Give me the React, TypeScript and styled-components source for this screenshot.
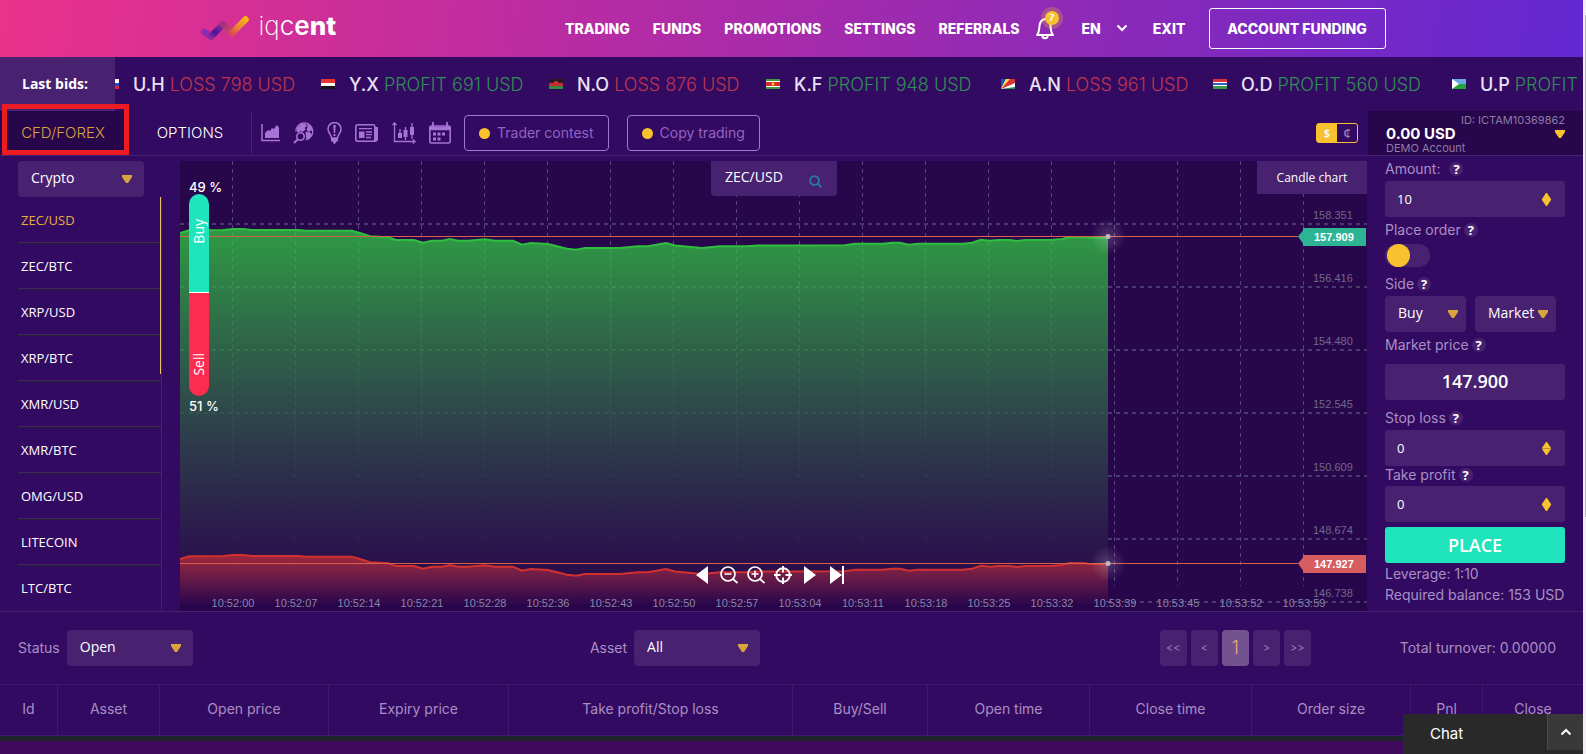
import React from "react";
import styled, { createGlobalStyle, css } from "styled-components";

const color = {
  panel: "#330a61",
  deep: "#28064b",
  box: "#482270",
  line: "#45226f",
  gold: "#f8c22f",
  goldDim: "#d9a43c",
  mint: "#20e4bb",
  red: "#fb2c4f",
  lilac: "#a873d6",
  muted: "#a98fc4",
};
const geo = `Inter, "Open Sans", sans-serif`;
const sans = `"Open Sans", "Noto Sans", sans-serif`;

const GlobalStyle = createGlobalStyle`
  *, *::before, *::after { box-sizing: border-box; }
  body { margin: 0; background: #3f0a5b; color: #fff; font-family: ${geo}; font-size: 14px; }
  button, input, select { font: inherit; color: inherit; margin: 0; }
  button { padding: 0; border: 0; background: none; cursor: pointer; }
  a { color: inherit; text-decoration: none; }
  svg { display: block; flex: none; }
`;

const Page = styled.div`
  min-height: 100vh;
  padding-right: 3px;
  overflow: hidden;
`;
const ScrollRail = styled.div`
  position: fixed;
  top: 0;
  right: 0;
  bottom: 0;
  width: 3px;
  background: #f4f0f6;
`;
const ScrollThumb = styled.div`
  width: 1px;
  height: 502px;
  margin: 15px 0 0 auto;
  background: #b9b5bd;
`;

/* ---------- header ---------- */
const Header = styled.header`
  height: 57px;
  background: linear-gradient(98deg, #ea328b 0%, #bb2ca1 34%, #8f2ab6 67%, #6228d2 100%);
`;
const HeaderInner = styled.div`
  display: flex;
  align-items: center;
  justify-content: space-between;
  width: 1188px;
  max-width: 100%;
  height: 56px;
  margin: 0 auto;
`;
const Logo = styled.a`
  display: flex;
  align-items: center;
  gap: 10px;
  padding-left: 3px;
`;
const LogoText = styled.span`
  padding-bottom: 4px;
  font: 300 26px/28px ${geo};
`;
const Thin = styled.span`
  font-weight: 200;
`;
const Semi = styled.span`
  font-weight: 600;
`;
const Heavy = styled.span`
  font-weight: 800;
`;
const Nav = styled.nav`
  display: flex;
  align-items: center;
  gap: 23px;
  font-weight: 800;
  font-size: 14px;
`;
const BellButton = styled.button`
  position: relative;
  width: 24px;
  height: 26px;
  margin-left: -8px;
`;
const BellBadge = styled.span`
  position: absolute;
  top: -4px;
  right: 0;
  width: 14px;
  height: 14px;
  border-radius: 50%;
  background: ${color.gold};
  box-shadow: 0 0 0 4px rgba(248, 194, 47, 0.25);
  font: 700 9px/14px ${geo};
  text-align: center;
`;
const LangButton = styled.button`
  display: flex;
  align-items: center;
  gap: 15px;
  padding-right: 2px;
  font-weight: 800;
`;
const FundingButton = styled.button`
  height: 41px;
  width: 177px;
  border: 1px solid #fff;
  border-radius: 3px;
  font-weight: 800;
`;

/* ---------- ticker ---------- */
const Ticker = styled.section`
  display: flex;
  height: 54px;
  background: ${color.panel};
`;
const TickerTitle = styled.div`
  flex: none;
  width: 115px;
  padding-left: 22px;
  background: ${color.box};
  font: 700 14px/54px ${sans};
`;
const TickerTrack = styled.div`
  flex: 1;
  min-width: 0;
  display: flex;
  justify-content: flex-start;
  overflow: hidden;
`;
const Bid = styled.div<{ $width: number }>`
  flex: none;
  display: flex;
  align-items: center;
  gap: 14px;
  width: ${(p) => p.$width}px;
  font-size: 18px;
  white-space: nowrap;
  &:first-child { margin-left: -10px; }
`;
const BidText = styled.span<{ $win: boolean }>`
  font-weight: 300;
  color: ${(p) => (p.$win ? "#2f8f55" : "#bf3650")};
`;
const Trader = styled.span`
  color: #e9e1f3;
  font-weight: 500;
`;

/* ---------- toolbar ---------- */
const Toolbar = styled.section`
  display: flex;
  height: 45px;
  background: ${color.panel};
  border-bottom: 1px solid ${color.line};
`;
const TabButton = styled.button<{ $active?: boolean }>`
  position: relative;
  width: ${(p) => (p.$active ? 129 : 123)}px;
  background: ${(p) => (p.$active ? color.deep : "transparent")};
  color: ${(p) => (p.$active ? color.goldDim : "#fff")};
  border-right: ${(p) => (p.$active ? "0" : `1px solid ${color.line}`)};
  font: 300 15px/20px ${geo};
  ${(p) =>
    p.$active &&
    css`
      padding-right: 3px;
      &::after {
        content: "";
        position: absolute;
        inset: -7px 0 0 2px;
        border: 5px solid #ed1c24;
      }
    `}
`;
const Tools = styled.div`
  display: flex;
  align-items: center;
  gap: 13px;
  padding: 0 18px 0 9px;
  color: ${color.lilac};
`;
const PillButton = styled.button`
  display: flex;
  align-items: center;
  justify-content: center;
  gap: 7px;
  height: 36px;
  padding: 0 14px;
  border: 1px solid ${color.lilac};
  border-radius: 4px;
  color: #9363c4;
  font: 400 14px/20px ${geo};
  & + & { margin-left: 5px; }
`;
const Dot = styled.span`
  width: 11px;
  height: 11px;
  border-radius: 50%;
  background: ${color.gold};
`;
const Spacer = styled.div`
  flex: 1;
`;
const UnitSwitch = styled.div`
  display: flex;
  align-self: center;
  height: 20px;
  margin-right: 9px;
  border: 1px solid ${color.gold};
  border-radius: 3px;
`;
const Unit = styled.button<{ $on?: boolean }>`
  width: 20px;
  background: ${(p) => (p.$on ? color.gold : "transparent")};
  color: ${(p) => (p.$on ? "#fff" : "#9b84b8")};
  font: 600 11px/18px ${sans};
`;
const Account = styled.button`
  width: 216px;
  padding: 2px 18px 0 18px;
  background: ${color.deep};
  border-left: 1px solid #241c38;
  text-align: left;
`;
const AccountId = styled.div`
  font: 400 11px/14px ${geo};
  color: #8f7ba8;
  text-align: right;
`;
const AccountRow = styled.div`
  display: flex;
  align-items: center;
  justify-content: space-between;
  font: 700 15px/14px ${geo};
`;
const AccountKind = styled.div`
  font: 400 11px/14px ${geo};
  color: #8f7ba8;
`;

/* ---------- workspace ---------- */
const Workspace = styled.main`
  display: grid;
  grid-template-columns: 180px minmax(0, 1fr) 216px;
  height: 456px;
  background: ${color.panel};
  border-bottom: 1px solid ${color.line};
`;
const Assets = styled.aside`
  display: flex;
  flex-direction: column;
  min-height: 0;
  padding: 5px 18px 0 18px;
`;
const AssetList = styled.ul`
  position: relative;
  flex: 1;
  min-height: 0;
  margin: 0;
  padding: 1px 0 0;
  overflow: hidden;
  list-style: none;
  border-right: 1px solid ${color.line};
  &::after {
    content: "";
    position: absolute;
    top: 0;
    right: 0;
    width: 1px;
    height: 177px;
    background: #efc06a;
  }
`;
const AssetItem = styled.li<{ $active: boolean }>`
  height: 46px;
  border-bottom: 1px solid #20222f;
  box-shadow: inset 0 -1px ${color.line};
  color: ${(p) => (p.$active ? "#e6ae3c" : "#fff")};
  &:last-child { border-bottom: 0; box-shadow: none; }
`;
const AssetButton = styled.button`
  width: 100%;
  height: 44px;
  padding-left: 3px;
  text-align: left;
  font: 400 13px/44px ${sans};
`;

const SelectWrap = styled.div<{ $width: number }>`
  position: relative;
  flex: none;
  width: ${(p) => p.$width}px;
  height: 36px;
  svg { position: absolute; right: ${(p) => (p.$width < 100 ? 8 : 12)}px; top: 14px; pointer-events: none; }
`;
const NativeSelect = styled.select`
  display: block;
  width: 100%;
  height: 36px;
  padding: 0 13px 2px;
  appearance: none;
  border: 0;
  border-radius: 4px;
  background: ${color.box};
  font: 400 14px/20px ${sans};
  color: #fff;
`;

const ChartPane = styled.section`
  position: relative;
  height: 450px;
  margin-top: 5px;
  overflow: hidden;
  background: ${color.deep};
`;
const ChartSvg = styled.svg`
  width: 100%;
  height: 450px;
`;
const AssetSearch = styled.button`
  position: absolute;
  top: 0;
  left: 531px;
  display: flex;
  align-items: center;
  justify-content: space-between;
  width: 126px;
  height: 35px;
  padding: 0 15px 3px 14px;
  border-radius: 0 0 4px 4px;
  background: ${color.box};
  font: 400 14px/20px ${sans};
  svg { margin-top: 9px; }
`;
const CandleButton = styled.button`
  position: absolute;
  top: 0;
  right: 0;
  width: 110px;
  height: 33px;
  background: ${color.box};
  font: 400 12px/20px ${sans};
`;
const Sentiment = styled.div`
  position: absolute;
  top: 18px;
  left: 9px;
  width: 32px;
  font: 500 13px/16px ${geo};
  white-space: nowrap;
`;
const SentimentBar = styled.div`
  display: flex;
  flex-direction: column;
  width: 20px;
  height: 202px;
  margin: -1px 0 2px;
  border-radius: 10px;
  overflow: hidden;
`;
const SentimentPart = styled.div<{ $sell?: boolean }>`
  height: ${(p) => (p.$sell ? 104 : 98)}px;
  padding: ${(p) => (p.$sell ? "0 0 20px" : "0 0 48px")};
  border-top: ${(p) => (p.$sell ? "1px solid #fff" : "0")};
  background: ${(p) => (p.$sell ? color.red : color.mint)};
  display: flex;
  align-items: flex-end;
`;
const Upright = styled.span`
  writing-mode: vertical-rl;
  transform: rotate(180deg);
  font: 400 14px/20px ${sans};
`;
const Playback = styled.div`
  position: absolute;
  left: 513px;
  bottom: 27px;
  display: flex;
  align-items: center;
  gap: 9px;
`;
const PlaybackButton = styled.button`
  width: 18px;
  height: 18px;
`;

/* ---------- order form ---------- */
const Order = styled.form`
  padding: 3px 18px 0;
  color: ${color.muted};
`;
const FieldLabel = styled.label<{ $top?: number; $tight?: boolean }>`
  display: flex;
  align-items: center;
  gap: ${(p) => (p.$top === 0 && !p.$tight ? 9 : 3)}px;
  height: ${(p) => (p.$tight ? 20 : 22)}px;
  margin-top: ${(p) => p.$top ?? 3}px;
  padding-bottom: ${(p) => (p.$tight ? 3 : 2)}px;
  font: 400 14px/20px ${geo};
`;
const Help = styled.button`
  width: 14px;
  height: 14px;
  border-radius: 50%;
  background: ${color.box};
  color: #fff;
  font: 700 13px/14px ${sans};
`;
const NumberBox = styled.div`
  position: relative;
  svg { position: absolute; right: 14px; top: 12px; pointer-events: none; }
`;
const NumberInput = styled.input`
  display: block;
  width: 100%;
  height: 36px;
  padding: 0 34px 0 12px;
  border: 0;
  border-radius: 3px;
  background: ${color.box};
  color: #fff;
  font: 400 13px/20px ${sans};
`;
const Toggle = styled.input`
  display: block;
  width: 45px;
  height: 23px;
  margin: 2px 0 0;
  padding: 0 2px;
  appearance: none;
  border-radius: 12px;
  background: ${color.box};
  &::before {
    content: "";
    display: block;
    width: 23px;
    height: 23px;
    border-radius: 50%;
    background: ${color.gold};
  }
`;
const SelectPair = styled.div`
  display: flex;
  gap: 9px;
`;
const Price = styled.output`
  display: block;
  height: 36px;
  margin-top: 7px;
  border-radius: 3px;
  background: ${color.box};
  color: #fff;
  font: 600 18px/35px ${sans};
  text-align: center;
`;
const PlaceButton = styled.button`
  display: block;
  width: 100%;
  height: 36px;
  margin-top: 5px;
  border-radius: 3px;
  background: ${color.mint};
  color: #fff;
  font: 600 18px/34px ${sans};
`;
const Note = styled.div`
  font: 400 14px/21px ${geo};
  white-space: nowrap;
`;

/* ---------- positions ---------- */
const Filters = styled.section`
  display: grid;
  grid-template-columns: 1fr 1fr 1fr;
  align-items: center;
  height: 72px;
  padding: 0 27px 0 18px;
  background: ${color.panel};
  color: ${color.muted};
  font: 300 14px/20px ${geo};
`;
const FilterGroup = styled.div`
  display: flex;
  align-items: center;
  gap: 7px;
  font-weight: 400;
`;
const FilterMid = styled(FilterGroup)`
  justify-content: center;
  padding-right: 224px;
`;
const FilterEnd = styled.div`
  display: flex;
  align-items: center;
  justify-content: flex-end;
  gap: 89px;
  font-weight: 400;
  white-space: nowrap;
`;
const Pager = styled.nav`
  display: flex;
  gap: 4px;
`;
const PageButton = styled.button<{ $on?: boolean }>`
  width: 27px;
  height: 36px;
  border-radius: 4px;
  background: ${(p) => (p.$on ? "#73528f" : color.box)};
  color: ${(p) => (p.$on ? "#f0a878" : "#b19bc8")};
  font: 300 ${(p) => (p.$on ? 18 : 11)}px/34px ${geo};
`;
const Positions = styled.table`
  width: 100%;
  table-layout: fixed;
  border-collapse: separate;
  border-spacing: 0;
  background: ${color.panel};
  border-top: 1px solid #42186b;
  border-bottom: 5px solid #20252b;
`;
const HeadCell = styled.th`
  height: 51px;
  padding: 0 0 2px;
  border-right: 1px solid #42186b;
  border-bottom: 1px solid #42186b;
  color: ${color.muted};
  font: 400 14px/20px ${geo};
  white-space: nowrap;
  &:last-child { border-right: 0; }
`;
const ChatBar = styled.section`
  position: fixed;
  right: 3px;
  bottom: 0;
  display: flex;
  justify-content: space-between;
  align-items: flex-start;
  width: 180px;
  height: 40px;
  padding-left: 27px;
  background: #292929;
  font: 400 15px/40px ${geo};
`;
const ChatToggle = styled.button`
  display: grid;
  place-items: center;
  width: 36px;
  height: 36px;
  background: #393939;
  border-left: 1px solid #4a4a4a;
`;

/* ---------- drawings ---------- */
const Caret = ({ fill = color.goldDim }: { fill?: string }) => (
  <svg width="10" height="8" viewBox="0 0 10 8" aria-hidden="true">
    <path d="M0 0h10v2L6 8H4L0 2z" fill={fill} />
  </svg>
);
const Diamond = ({ split }: { split?: boolean }) => (
  <svg width="9" height="13" viewBox="0 0 9 13" aria-hidden="true">
    <path d="M4 0h1L9 6v1L5 13H4L0 7V6z" fill={color.gold} />
    {split && <path d="M0 6.5h9" stroke="#c08f34" />}
  </svg>
);
const LogoMark = () => (
  <svg width="48" height="26" viewBox="0 0 48 26" fill="none" strokeWidth="6.500" strokeLinecap="round" aria-hidden="true">
    <defs>
      <linearGradient id="lg1" gradientUnits="userSpaceOnUse" x1="2" y1="15" x2="12" y2="24"><stop stopColor="#8a2bb8" /><stop offset="1" stopColor="#9b2c9c" /></linearGradient>
      <linearGradient id="lg2" gradientUnits="userSpaceOnUse" x1="9" y1="23" x2="22" y2="9"><stop stopColor="#8e2ca0" /><stop offset=".4" stopColor="#4a12a0" /><stop offset="1" stopColor="#9c3088" /></linearGradient>
      <linearGradient id="lg3" gradientUnits="userSpaceOnUse" x1="22" y1="9" x2="31" y2="18"><stop stopColor="#a02f85" /><stop offset="1" stopColor="#d84a58" /></linearGradient>
      <linearGradient id="lg4" gradientUnits="userSpaceOnUse" x1="30" y1="19" x2="46" y2="4"><stop stopColor="#d84a52" /><stop offset=".45" stopColor="#ec8338" /><stop offset="1" stopColor="#f9b814" /></linearGradient>
    </defs>
    <path d="M3.500 17L10 21.500" stroke="url(#lg1)" />
    <path d="M10 21.500L22 9.500" stroke="url(#lg2)" />
    <path d="M22 9.500l9 8.500" stroke="url(#lg3)" />
    <path d="M31 18L44.500 4.500" stroke="url(#lg4)" />
  </svg>
);
const Bell = () => (
  <svg width="20" height="24" viewBox="0 0 20 24" fill="none" stroke="#fff" strokeWidth="2" strokeLinejoin="round" aria-hidden="true">
    <path d="M2 19c2-2 2-4 2.500-9C5 5 7 4 10 3c3 1 5 2 5.500 7 .5 5 .5 7 2.500 9z" />
    <path d="M7.500 20c0 3 5 3 5 0" />
  </svg>
);
const Chevron = ({ up }: { up?: boolean }) => (
  <svg width="12" height="8" viewBox="0 0 12 8" fill="none" stroke="#fff" strokeWidth="2" aria-hidden="true">
    <path d={up ? "M1.500 6.500L6 2l4.500 4.500" : "M1.500 1.500L6 6l4.500-4.500"} />
  </svg>
);
const AreaIcon = () => (
  <svg width="19" height="18" viewBox="0 0 19 18" aria-hidden="true">
    <path d="M1 0v16.500h18" fill="none" stroke="currentColor" strokeWidth="1.500" />
    <path d="M4 14V9l3-3 2 1 2-3 2 1 2-3 1-1 2 3v10z" fill="currentColor" />
  </svg>
);
const GlobeIcon = () => (
  <svg width="21" height="22" viewBox="0 0 21 22" fill="none" stroke="currentColor" aria-hidden="true">
    <path d="M2.800 9.500A8.500 8.500 0 1 1 12.500 17.800" strokeWidth="1.300" />
    <path d="M4 6l4-4 4-.5 2 2.500-2 1.500.5 2-3 2.500-2-1-2 1.500-2-1zM14 1.500l4 3 2 5-2-1-2 1.500-2.500-2 1-3zM12.500 9.500l5 1 1 2-2.500 5-3-1z" fill="currentColor" stroke="none" />
    <circle cx="7.500" cy="14.500" r="3.700" strokeWidth="1.600" />
    <path d="M5 17l-4 4" strokeWidth="2" />
  </svg>
);
const BulbIcon = () => (
  <svg width="15" height="22" viewBox="0 0 15 22" aria-hidden="true">
    <path d="M4.500 16C4.500 13 1 11 1 7a6.500 6.500 0 0 1 13 0c0 4-3.500 6-3.500 9z" fill="none" stroke="currentColor" strokeWidth="1.500" />
    <path d="M6.300 3h2.400L8.200 11H6.800zM6.500 12h2v2h-2zM4 16h7v3l-2 1-1 2H7l-1-2-2-1z" fill="currentColor" />
  </svg>
);
const NewsIcon = () => (
  <svg width="24" height="18" viewBox="0 0 24 18" fill="none" stroke="currentColor" aria-hidden="true">
    <rect x=".8" y=".8" width="19" height="16.400" rx="2" strokeWidth="1.600" />
    <path d="M21.500 3v12.500L20 17h-1" strokeWidth="3" />
    <path d="M4 4.700h13M11 8h6M11 10.700h6M11 13.500h5" strokeWidth="1.300" />
    <path d="M4 7.500h5.500V14H4z" fill="currentColor" stroke="none" />
  </svg>
);
const CandleIcon = () => (
  <svg width="24" height="22" viewBox="0 0 24 22" fill="none" stroke="currentColor" aria-hidden="true">
    <path d="M2.500 1v18.500H23M.5 3L2.500 1l2 2M21 17.500l2 2-2 2" strokeWidth="1.300" />
    <path d="M8 7v5M13.500 5v13M20 1v16" strokeWidth="1.300" />
    <path d="M6 11h4v5H6zM11.500 8h4v7h-4zM18 5h4v8h-4z" fill="currentColor" stroke="none" />
  </svg>
);
const CalendarIcon = () => (
  <svg width="22" height="22" viewBox="0 0 22 22" fill="none" stroke="currentColor" aria-hidden="true">
    <rect x=".8" y="4" width="20.400" height="17" rx="1.500" strokeWidth="1.600" />
    <path d="M1 6.500h20" strokeWidth="3.500" />
    <path d="M4 0v6M18 0v6" strokeWidth="1.800" />
    <path d="M8.500 10.500h3v3h-3zM13 10.500h3v3h-3zM4 10.500h3v3H4zM4 15.500h3v3H4zM8.500 15.500h3v3h-3z" fill="currentColor" stroke="none" />
  </svg>
);
const SearchIcon = () => (
  <svg width="13" height="13" viewBox="0 0 13 13" fill="none" stroke="#2a7ba6" strokeWidth="1.800" aria-hidden="true">
    <circle cx="5.500" cy="5.500" r="4.400" />
    <path d="M8.500 8.500l4 4" />
  </svg>
);

type Stripe = [string, number, number];
const flags: Record<string, { bands: Stripe[]; extra?: React.ReactNode }> = {
  si: { bands: [["#fff", 0, 4], ["#1d4fd0", 4, 3], ["#e8242c", 7, 3]] },
  ye: { bands: [["#e8322f", 0, 4], ["#f4f4f4", 4, 3], ["#15101a", 7, 3]] },
  mw: { bands: [["#231b20", 0, 4], ["#c92a33", 4, 3], ["#2f8f3d", 7, 3]], extra: <path d="M4 4q3-4 6 0z" fill="#d83038" /> },
  sr: { bands: [["#3c9a3f", 0, 2], ["#fff", 2, 1], ["#d8292f", 3, 4], ["#fff", 7, 1], ["#3c9a3f", 8, 2]], extra: <circle cx="7" cy="5" r="1.500" fill="#f5d030" /> },
  sc: {
    bands: [["#fff", 0, 10]],
    extra: (
      <>
        <path d="M0 10V0h5z" fill="#2251b5" />
        <path d="M0 10L5 0h4z" fill="#f6dc45" />
        <path d="M0 10L9 0h5v4z" fill="#dc3030" />
        <path d="M0 10l14-2v2z" fill="#2b8b48" />
      </>
    ),
  },
  gm: { bands: [["#d83236", 0, 3], ["#fff", 3, 1], ["#3161c4", 4, 2], ["#fff", 6, 1], ["#3b9a49", 7, 3]] },
  dj: { bands: [["#6ba6ea", 0, 5], ["#25a33a", 5, 5]], extra: <path d="M0 0l7 5-7 5z" fill="#fff" /> },
};
const Flag = ({ code }: { code: string }) => (
  <svg width="14" height="10" viewBox="0 0 14 10" aria-hidden="true">
    {flags[code].bands.map(([fill, y, h], i) => (
      <rect key={i} y={y} width="14" height={h} fill={fill} />
    ))}
    {flags[code].extra}
  </svg>
);

/* ---------- data ---------- */
const bids = [
  { flag: "si", who: "U.H", win: false, sum: 798, width: 216 },
  { flag: "ye", who: "Y.X", win: true, sum: 691, width: 228 },
  { flag: "mw", who: "N.O", win: false, sum: 876, width: 217 },
  { flag: "sr", who: "K.F", win: true, sum: 948, width: 235 },
  { flag: "sc", who: "A.N", win: false, sum: 961, width: 212 },
  { flag: "gm", who: "O.D", win: true, sum: 560, width: 239 },
  { flag: "dj", who: "U.P", win: true, sum: 0, width: 140 },
];
const assets = ["ZEC/USD", "ZEC/BTC", "XRP/USD", "XRP/BTC", "XMR/USD", "XMR/BTC", "OMG/USD", "LITECOIN", "LTC/BTC"];
const times = [
  "10:52:00", "10:52:07", "10:52:14", "10:52:21", "10:52:28", "10:52:36", "10:52:43", "10:52:50", "10:52:57",
  "10:53:04", "10:53:11", "10:53:18", "10:53:25", "10:53:32", "10:53:39", "10:53:45", "10:53:52", "10:53:59",
];
const prices = ["158.351", "156.416", "154.480", "152.545", "150.609", "148.674", "146.738"];
const columns: [string, number][] = [
  ["Id", 58], ["Asset", 102], ["Open price", 169], ["Expiry price", 180], ["Take profit/Stop loss", 284],
  ["Buy/Sell", 135], ["Open time", 162], ["Close time", 162], ["Order size", 159], ["Pnl", 72], ["Close", 100],
];
const quotes: [number, number][] = [
  [0, 72], [9, 69.3], [43, 69], [53, 68], [63, 68], [72, 69], [117, 69], [127, 69.7], [172, 69.7], [180, 72],
  [190, 75.3], [208, 76.3], [216, 79], [234, 79], [243, 81.7], [252, 79.7], [262, 79.7], [270, 78], [278, 79.7],
  [288, 79.7], [305, 78.3], [315, 79.7], [333, 79.7], [342, 83.7], [351, 82], [368, 83], [387, 87.7], [396, 88.7],
  [405, 87], [440, 87], [458, 85.3], [468, 85.3], [486, 82], [495, 84.5], [522, 87], [540, 85.3], [567, 85.3],
  [577, 84.5], [665, 84.3], [675, 82.7], [703, 82.7], [712, 81.7], [720, 81.7], [729, 83.7], [738, 82.7],
  [783, 82.7], [792, 81.7], [801, 78.7], [810, 79.7], [818, 79], [830, 79], [837, 80], [845, 79], [873, 78.7],
  [882, 78], [890, 76], [905, 76.3], [908, 77], [928, 77],
];
const SPREAD = 326;
const tracePath = (dy: number) => "M" + quotes.map(([x, y]) => `${x} ${y + dy}`).join("L");

const GridLines = () => (
  <>
    {times.map((t, i) => (
      <path key={t} d={`M${52.5 + i * 63} 0V425`} />
    ))}
    {prices.map((p, i) => (
      <path key={p} d={`M0 ${63 + i * 63}H1187`} strokeWidth="1.400" />
    ))}
  </>
);

const Chart = () => (
  <ChartSvg viewBox="0 0 1187 450" preserveAspectRatio="xMaxYMin slice" role="img" aria-label="ZEC/USD price chart">
    <defs>
      <linearGradient id="green" gradientUnits="userSpaceOnUse" x1="0" y1="70" x2="0" y2="440">
        <stop stopColor="#2fa044" stopOpacity=".96" />
        <stop offset="1" stopColor="#3a7850" stopOpacity="0" />
      </linearGradient>
      <linearGradient id="red" gradientUnits="userSpaceOnUse" x1="0" y1="393" x2="0" y2="445">
        <stop stopColor="#b32a38" stopOpacity=".88" />
        <stop offset="1" stopColor="#a52a50" stopOpacity="0" />
      </linearGradient>
      <linearGradient id="gridFade" gradientUnits="userSpaceOnUse" x1="0" y1="70" x2="0" y2="330">
        <stop stopColor="#5ad870" stopOpacity=".32" />
        <stop offset="1" stopColor="#5ad870" stopOpacity="0" />
      </linearGradient>
      <radialGradient id="glow">
        <stop stopColor="#fff" stopOpacity=".2" />
        <stop offset="1" stopColor="#fff" stopOpacity="0" />
      </radialGradient>
      <clipPath id="underQuotes">
        <path d={`${tracePath(0)}V450H0z`} />
      </clipPath>
    </defs>
    <g stroke="#6a6a8c" strokeOpacity=".7" strokeDasharray="4 4" fill="none">
      <GridLines />
    </g>
    <path d={`${tracePath(0)}V450H0z`} fill={color.deep} fillOpacity=".9" />
    <path d={`${tracePath(0)}V450H0z`} fill="url(#green)" />
    <g stroke="url(#gridFade)" strokeDasharray="4 4" fill="none" clipPath="url(#underQuotes)">
      <GridLines />
    </g>
    <path d={tracePath(0)} fill="none" stroke="#2fbf3f" strokeWidth="2" />
    <path d={`${tracePath(SPREAD)}V450H0z`} fill="url(#red)" />
    <path d={tracePath(SPREAD)} fill="none" stroke="#d3302f" strokeWidth="2" />
    <path d="M0 75.500H1118M0 402.500H1118" stroke="#d95f48" />
    <g fontFamily="Liberation Sans, sans-serif" fontSize="11">
      {prices.map((p, i) => (
        <text key={p} x="1133" y={58 + i * 63} fill="#6f698c">{p}</text>
      ))}
      {times.map((t, i) => (
        <text key={t} x={53 + i * 63} y="446" textAnchor="middle" fill="#8785a8">{t}</text>
      ))}
      <path d="M1118 75.500l5-6V67h63v18h-63v-2.500z" fill="#2cb494" />
      <path d="M1118 402.500l5-6V394h63v18h-63v-2.500z" fill="#d85d60" />
      <g fill="#fff" fontWeight="bold">
        <text x="1134" y="80">157.909</text>
        <text x="1134" y="407">147.927</text>
      </g>
    </g>
    {[75.5, 402.5].map((y) => (
      <g key={y}>
        <circle cx="928" cy={y} r="18" fill="url(#glow)" />
        <circle cx="928" cy={y} r="2.500" fill="#c3b4c8" />
      </g>
    ))}
  </ChartSvg>
);

const playback = [
  { name: "Back", art: <path d="M15 0v18L3 9z" fill="#fff" /> },
  {
    name: "Zoom out",
    art: (
      <g fill="none" stroke="#fff" strokeWidth="1.700">
        <circle cx="8" cy="8" r="7" />
        <path d="M4.500 8h7M13 13l4.500 4" />
      </g>
    ),
  },
  {
    name: "Zoom in",
    art: (
      <g fill="none" stroke="#fff" strokeWidth="1.700">
        <circle cx="8" cy="8" r="7" />
        <path d="M4.500 8h7M8 4.500v7M13 13l4.500 4" />
      </g>
    ),
  },
  {
    name: "Centre",
    art: (
      <g fill="none" stroke="#fff" strokeWidth="1.900">
        <circle cx="9" cy="9" r="6.800" />
        <path d="M9 0v6.500M9 11.500V18M0 9h6.500M11.500 9H18" />
      </g>
    ),
  },
  { name: "Forward", art: <path d="M3 0v18L15 9z" fill="#fff" /> },
  { name: "Latest", art: <path d="M2 0v18l12-9zM14 0h2v18h-2z" fill="#fff" /> },
];

const Choice = ({ id, name, value, width }: { id?: string; name?: string; value: string; width: number }) => (
  <SelectWrap $width={width}>
    <NativeSelect id={id} aria-label={name} defaultValue={value}>
      <option>{value}</option>
    </NativeSelect>
    <Caret />
  </SelectWrap>
);
const LabelWithHelp = ({ id, text, top, tight }: { id: string; text: string; top?: number; tight?: boolean }) => (
  <FieldLabel htmlFor={id} $top={top} $tight={tight}>
    {text}
    <Help type="button" aria-label={`About ${text}`}>?</Help>
  </FieldLabel>
);
const NumberField = ({ id, value, split }: { id: string; value: string; split?: boolean }) => (
  <NumberBox>
    <NumberInput id={id} type="text" inputMode="decimal" defaultValue={value} />
    <Diamond split={split} />
  </NumberBox>
);

export default function App() {
  return (
    <>
      <GlobalStyle />
      <Page>
        <Header>
          <HeaderInner>
            <Logo href="#">
              <LogoMark />
              <LogoText><Thin>iq</Thin>c<Semi>e</Semi><Heavy>nt</Heavy></LogoText>
            </Logo>
            <Nav>
              {["TRADING", "FUNDS", "PROMOTIONS", "SETTINGS", "REFERRALS"].map((n) => (
                <a key={n} href="#">{n}</a>
              ))}
              <BellButton aria-label="Notifications">
                <Bell />
                <BellBadge>7</BellBadge>
              </BellButton>
              <LangButton>EN <Chevron /></LangButton>
              <a href="#">EXIT</a>
              <FundingButton>ACCOUNT FUNDING</FundingButton>
            </Nav>
          </HeaderInner>
        </Header>

        <Ticker>
          <TickerTitle>Last bids:</TickerTitle>
          <TickerTrack>
            {bids.map((b) => (
              <Bid key={b.who} $width={b.width}>
                <Flag code={b.flag} />
                <BidText $win={b.win}>
                  <Trader>{b.who}</Trader> {b.win ? "PROFIT" : "LOSS"}{b.sum ? ` ${b.sum} USD` : ""}
                </BidText>
              </Bid>
            ))}
          </TickerTrack>
        </Ticker>

        <Toolbar>
          <TabButton $active>CFD/FOREX</TabButton>
          <TabButton>OPTIONS</TabButton>
          <Tools>
            <button aria-label="Charts"><AreaIcon /></button>
            <button aria-label="Market research"><GlobeIcon /></button>
            <button aria-label="Signals"><BulbIcon /></button>
            <button aria-label="News"><NewsIcon /></button>
            <button aria-label="Indicators"><CandleIcon /></button>
            <button aria-label="Calendar"><CalendarIcon /></button>
            <PillButton><Dot />Trader contest</PillButton>
            <PillButton><Dot />Copy trading</PillButton>
          </Tools>
          <Spacer />
          <UnitSwitch>
            <Unit $on>$</Unit>
            <Unit>₵</Unit>
          </UnitSwitch>
          <Account>
            <AccountId>ID: ICTAM10369862</AccountId>
            <AccountRow>0.00 USD <Caret fill={color.gold} /></AccountRow>
            <AccountKind>DEMO Account</AccountKind>
          </Account>
        </Toolbar>

        <Workspace>
          <Assets>
            <Choice name="Market" value="Crypto" width={126} />
            <AssetList>
              {assets.map((a, i) => (
                <AssetItem key={a} $active={i === 0}>
                  <AssetButton>{a}</AssetButton>
                </AssetItem>
              ))}
            </AssetList>
          </Assets>

          <ChartPane>
            <Chart />
            <Sentiment>
              <div>49 %</div>
              <SentimentBar>
                <SentimentPart><Upright>Buy</Upright></SentimentPart>
                <SentimentPart $sell><Upright>Sell</Upright></SentimentPart>
              </SentimentBar>
              <div>51 %</div>
            </Sentiment>
            <AssetSearch>ZEC/USD <SearchIcon /></AssetSearch>
            <CandleButton>Candle chart</CandleButton>
            <Playback>
              {playback.map((p) => (
                <PlaybackButton key={p.name} aria-label={p.name}>
                  <svg width="18" height="18" viewBox="0 0 18 18">{p.art}</svg>
                </PlaybackButton>
              ))}
            </Playback>
          </ChartPane>

          <Order onSubmit={(e) => e.preventDefault()}>
            <LabelWithHelp id="amount" text="Amount:" top={0} />
            <NumberField id="amount" value="10" />
            <LabelWithHelp id="place-order" text="Place order" />
            <Toggle id="place-order" type="checkbox" />
            <LabelWithHelp id="side" text="Side" top={7} />
            <SelectPair>
              <Choice id="side" value="Buy" width={81} />
              <Choice name="Order type" value="Market" width={81} />
            </SelectPair>
            <LabelWithHelp id="price" text="Market price" />
            <Price id="price">147.900</Price>
            <LabelWithHelp id="stop" text="Stop loss" top={8} />
            <NumberField id="stop" value="0" split />
            <LabelWithHelp id="take" text="Take profit" top={0} tight />
            <NumberField id="take" value="0" />
            <PlaceButton type="submit">PLACE</PlaceButton>
            <Note>Leverage: 1:10</Note>
            <Note>Required balance: 153 USD</Note>
          </Order>
        </Workspace>

        <Filters>
          <FilterGroup>
            <label htmlFor="status">Status</label>
            <Choice id="status" value="Open" width={126} />
          </FilterGroup>
          <FilterMid>
            <label htmlFor="asset">Asset</label>
            <Choice id="asset" value="All" width={126} />
          </FilterMid>
          <FilterEnd>
            <Pager aria-label="Pages">
              <PageButton>&lt;&lt;</PageButton>
              <PageButton>&lt;</PageButton>
              <PageButton $on>1</PageButton>
              <PageButton>&gt;</PageButton>
              <PageButton>&gt;&gt;</PageButton>
            </Pager>
            <span>Total turnover: 0.00000</span>
          </FilterEnd>
        </Filters>

        <Positions>
          <colgroup>
            {columns.map(([name, width]) => <col key={name} width={width} />)}
          </colgroup>
          <thead>
            <tr>
              {columns.map(([name]) => <HeadCell key={name} scope="col">{name}</HeadCell>)}
            </tr>
          </thead>
        </Positions>
      </Page>
      <ChatBar>
        Chat
        <ChatToggle aria-label="Open chat"><Chevron up /></ChatToggle>
      </ChatBar>
      <ScrollRail><ScrollThumb /></ScrollRail>
    </>
  );
}
